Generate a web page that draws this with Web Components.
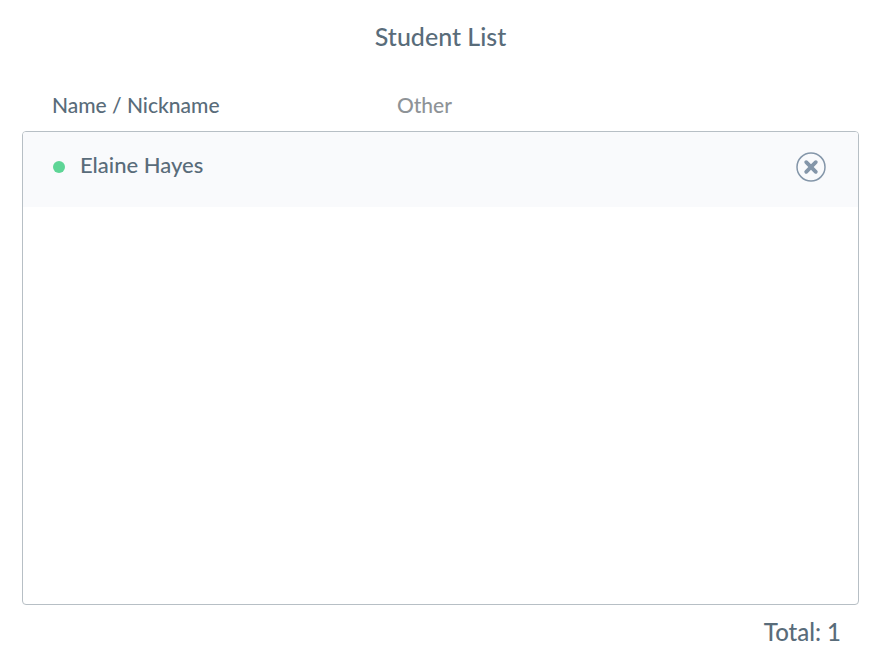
<!DOCTYPE html>
<html lang="en">
<head>
  <meta charset="UTF-8">
  <meta name="viewport" content="width=device-width, initial-scale=1.0">
  <title>Student List</title>
  <style>
    body {
      margin: 0;
      background: #fff;
      color: #596c7a;
      font-family: Lato, "Liberation Sans", sans-serif;
      font-weight: 500;
    }
  </style>
</head>
<body>
  <student-list>
    <span slot="title">Student List</span>
  </student-list>

  <script>
    // Round remove button with a cross
    class RemoveButton extends HTMLElement {
      constructor() {
        super();
        this.attachShadow({ mode: 'open' });
        this.shadowRoot.innerHTML = `
          <style>
            :host { display: block; }
            button {
              display: block;
              padding: 0;
              border: 0;
              border-radius: 50%;
              background: none;
              color: #8496a9;
              cursor: pointer;
            }
            svg { display: block; }
          </style>
          <button type="button">
            <svg width="30" height="30" viewBox="0 0 30 30" fill="none" stroke="currentColor" aria-hidden="true">
              <circle cx="15" cy="15" r="14" stroke-width="1.5"/>
              <path d="M10.2 10.2l9.6 9.6M19.8 10.2l-9.6 9.6" stroke-width="3.8" stroke-linecap="round"/>
            </svg>
          </button>
        `;
      }

      connectedCallback() {
        const button = this.shadowRoot.querySelector('button');
        button.setAttribute('aria-label', this.getAttribute('label') || 'Remove');
      }
    }

    // Student name with a status dot before it
    class StudentName extends HTMLElement {
      constructor() {
        super();
        this.attachShadow({ mode: 'open' });
        this.shadowRoot.innerHTML = `
          <style>
            :host {
              display: flex;
              align-items: center;
              gap: 15px;
            }
            .dot {
              width: 12px;
              height: 12px;
              margin: 4px 0 0 1px;
              border-radius: 50%;
              background: #5ed596;
            }
          </style>
          <span class="dot"></span>
          <slot></slot>
        `;
      }
    }

    class StudentList extends HTMLElement {
      constructor() {
        super();
        this.students = [{ name: 'Elaine Hayes', other: '' }];

        this.attachShadow({ mode: 'open' });
        this.shadowRoot.innerHTML = `
          <style>
            :host {
              display: flex;
              flex-direction: column;
              box-sizing: border-box;
              min-height: 100vh;
              padding: 20px 23px 12px 22px;
            }
            h1 {
              margin: 0 0 37px;
              font-size: 25px;
              line-height: 32px;
              font-weight: 500;
              text-align: center;
            }
            table {
              flex: 1;
              display: flex;
              flex-direction: column;
              font-size: 22px;
              line-height: 32px;
            }
            thead, tbody { display: block; }
            thead { font-size: 21px; }
            tbody {
              flex: 1;
              border: 1px solid #b7bfc5;
              border-radius: 4px;
              overflow: hidden;
            }
            tr {
              display: grid;
              grid-template-columns: 4fr 5fr;
              padding: 0 31px 0 30px;
            }
            th, td {
              padding: 0;
              font-weight: 500;
              text-align: left;
            }
            thead tr { padding-bottom: 10px; }
            thead th + th { color: #8e9397; }
            tbody tr {
              padding: 17px 32px 25px 29px;
              background: #f9fafc;
            }
            td {
              display: flex;
              justify-content: space-between;
            }
            remove-button { margin: 3px 0 0 auto; }
            .total {
              margin: 0;
              padding: 11px 18px 0 0;
              font-size: 24px;
              line-height: 32px;
              text-align: right;
            }
          </style>
          <h1><slot name="title"></slot></h1>
          <table>
            <thead>
              <tr>
                <th scope="col">Name / Nickname</th>
                <th scope="col">Other</th>
              </tr>
            </thead>
            <tbody></tbody>
          </table>
          <p class="total"></p>
        `;
      }

      connectedCallback() {
        this.render();
      }

      render() {
        const tbody = this.shadowRoot.querySelector('tbody');
        const total = this.shadowRoot.querySelector('.total');

        tbody.innerHTML = '';
        this.students.forEach((student, index) => {
          const row = document.createElement('tr');
          row.innerHTML = `
            <th scope="row"><student-name>${student.name}</student-name></th>
            <td>${student.other}<remove-button label="Remove ${student.name}"></remove-button></td>
          `;
          row.querySelector('remove-button').addEventListener('click', () => this.remove(index));
          tbody.appendChild(row);
        });
        total.textContent = `Total: ${this.students.length}`;
      }

      remove(index) {
        this.students.splice(index, 1);
        this.render();
      }
    }

    customElements.define('remove-button', RemoveButton);
    customElements.define('student-name', StudentName);
    customElements.define('student-list', StudentList);
  </script>
</body>
</html>
